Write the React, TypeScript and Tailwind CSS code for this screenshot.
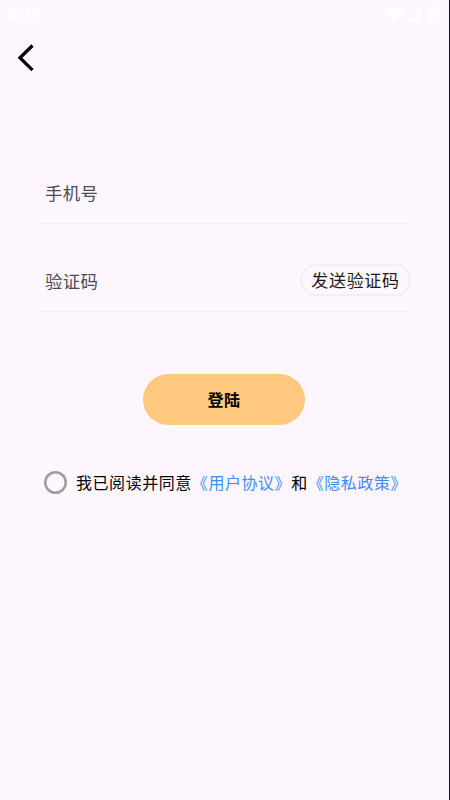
import { useState } from "react";

export default function App() {
  const [phone, setPhone] = useState("");
  const [code, setCode] = useState("");
  const [agreed, setAgreed] = useState(false);

  return (
    <div className="flex h-[800px] w-[450px] flex-col overflow-hidden border-r border-[#11131c] bg-[#fef7ff] font-['Noto_Sans_CJK_SC','Noto_Sans',sans-serif] text-[#1d1b20]">
      <StatusBar />

      <header className="flex h-14 items-center pl-[17px]">
        <button type="button" aria-label="返回">
          <svg width="18" height="28" viewBox="0 0 18 28" fill="none" stroke="#000" strokeWidth="3.3">
            <path d="M15.5 1.5 3 13.8l12.5 12.3" />
          </svg>
        </button>
      </header>

      <form className="flex flex-col pt-[78px] pr-[37px] pl-9" onSubmit={(e) => e.preventDefault()}>
        <div className="flex h-[60px] items-center border-b border-[#f0edf0] pb-px pl-[9px]">
          <Field label="手机号" value={phone} onChange={setPhone} />
        </div>

        <div className="mt-7 flex h-[60px] items-center border-b border-[#f0edf0] pb-0.5 pl-[9px]">
          <Field label="验证码" value={code} onChange={setCode} />
          <button
            type="button"
            className="mr-px mb-px h-8 w-[111px] shrink-0 rounded-full border-2 border-[#f2eff2] text-[17px] leading-7 tracking-[0.7px] whitespace-nowrap"
          >
            发送验证码
          </button>
        </div>

        <button
          type="submit"
          className="mt-[62px] ml-[107px] h-[51px] w-[162px] rounded-full bg-[#ffc980] pb-0.5 text-base font-bold tracking-[0.4px] text-black"
        >
          登陆
        </button>
      </form>

      <div className="mt-[45px] flex items-center pl-11">
        <button
          type="button"
          role="checkbox"
          aria-checked={agreed}
          aria-label="同意协议"
          onClick={() => setAgreed(!agreed)}
          className={`size-[23px] shrink-0 rounded-full shadow-[inset_0_0_0_2.5px_#9e9e9e] ${agreed ? "bg-[#ffc980]" : ""}`}
        />
        <p className="ml-[9px] text-base leading-6 tracking-[0.55px] whitespace-nowrap text-black">
          我已阅读并同意<span className="text-[#448aff]">《用户协议》</span>和
          <span className="text-[#448aff]">《隐私政策》</span>
        </p>
      </div>
    </div>
  );
}

function StatusBar() {
  return (
    <div className="flex h-[30px] shrink-0 items-center justify-between pr-[9px] pl-[7px] text-white">
      <span className="font-[Roboto,sans-serif] text-[17.5px] font-medium">5:39</span>
      <svg width="56" height="18" viewBox="0 0 56 18" fill="currentColor">
        <path d="M0 4Q10-2 20 4L10 16Z" />
        <path d="M23 16 37 2v14Z" />
        <path
          fillRule="evenodd"
          d="M48 0h4v2h2.5v14h-9V2H48Zm3 4-3 5h2v4l3-5h-2Z"
        />
      </svg>
    </div>
  );
}

function Field({ label, value, onChange }: { label: string; value: string; onChange: (v: string) => void }) {
  return (
    <input
      className="min-w-0 flex-1 bg-transparent text-[17.4px] leading-6 tracking-[0.4px] outline-none placeholder:text-[#494d52]"
      aria-label={label}
      placeholder={label}
      value={value}
      onChange={(e) => onChange(e.target.value)}
    />
  );
}
